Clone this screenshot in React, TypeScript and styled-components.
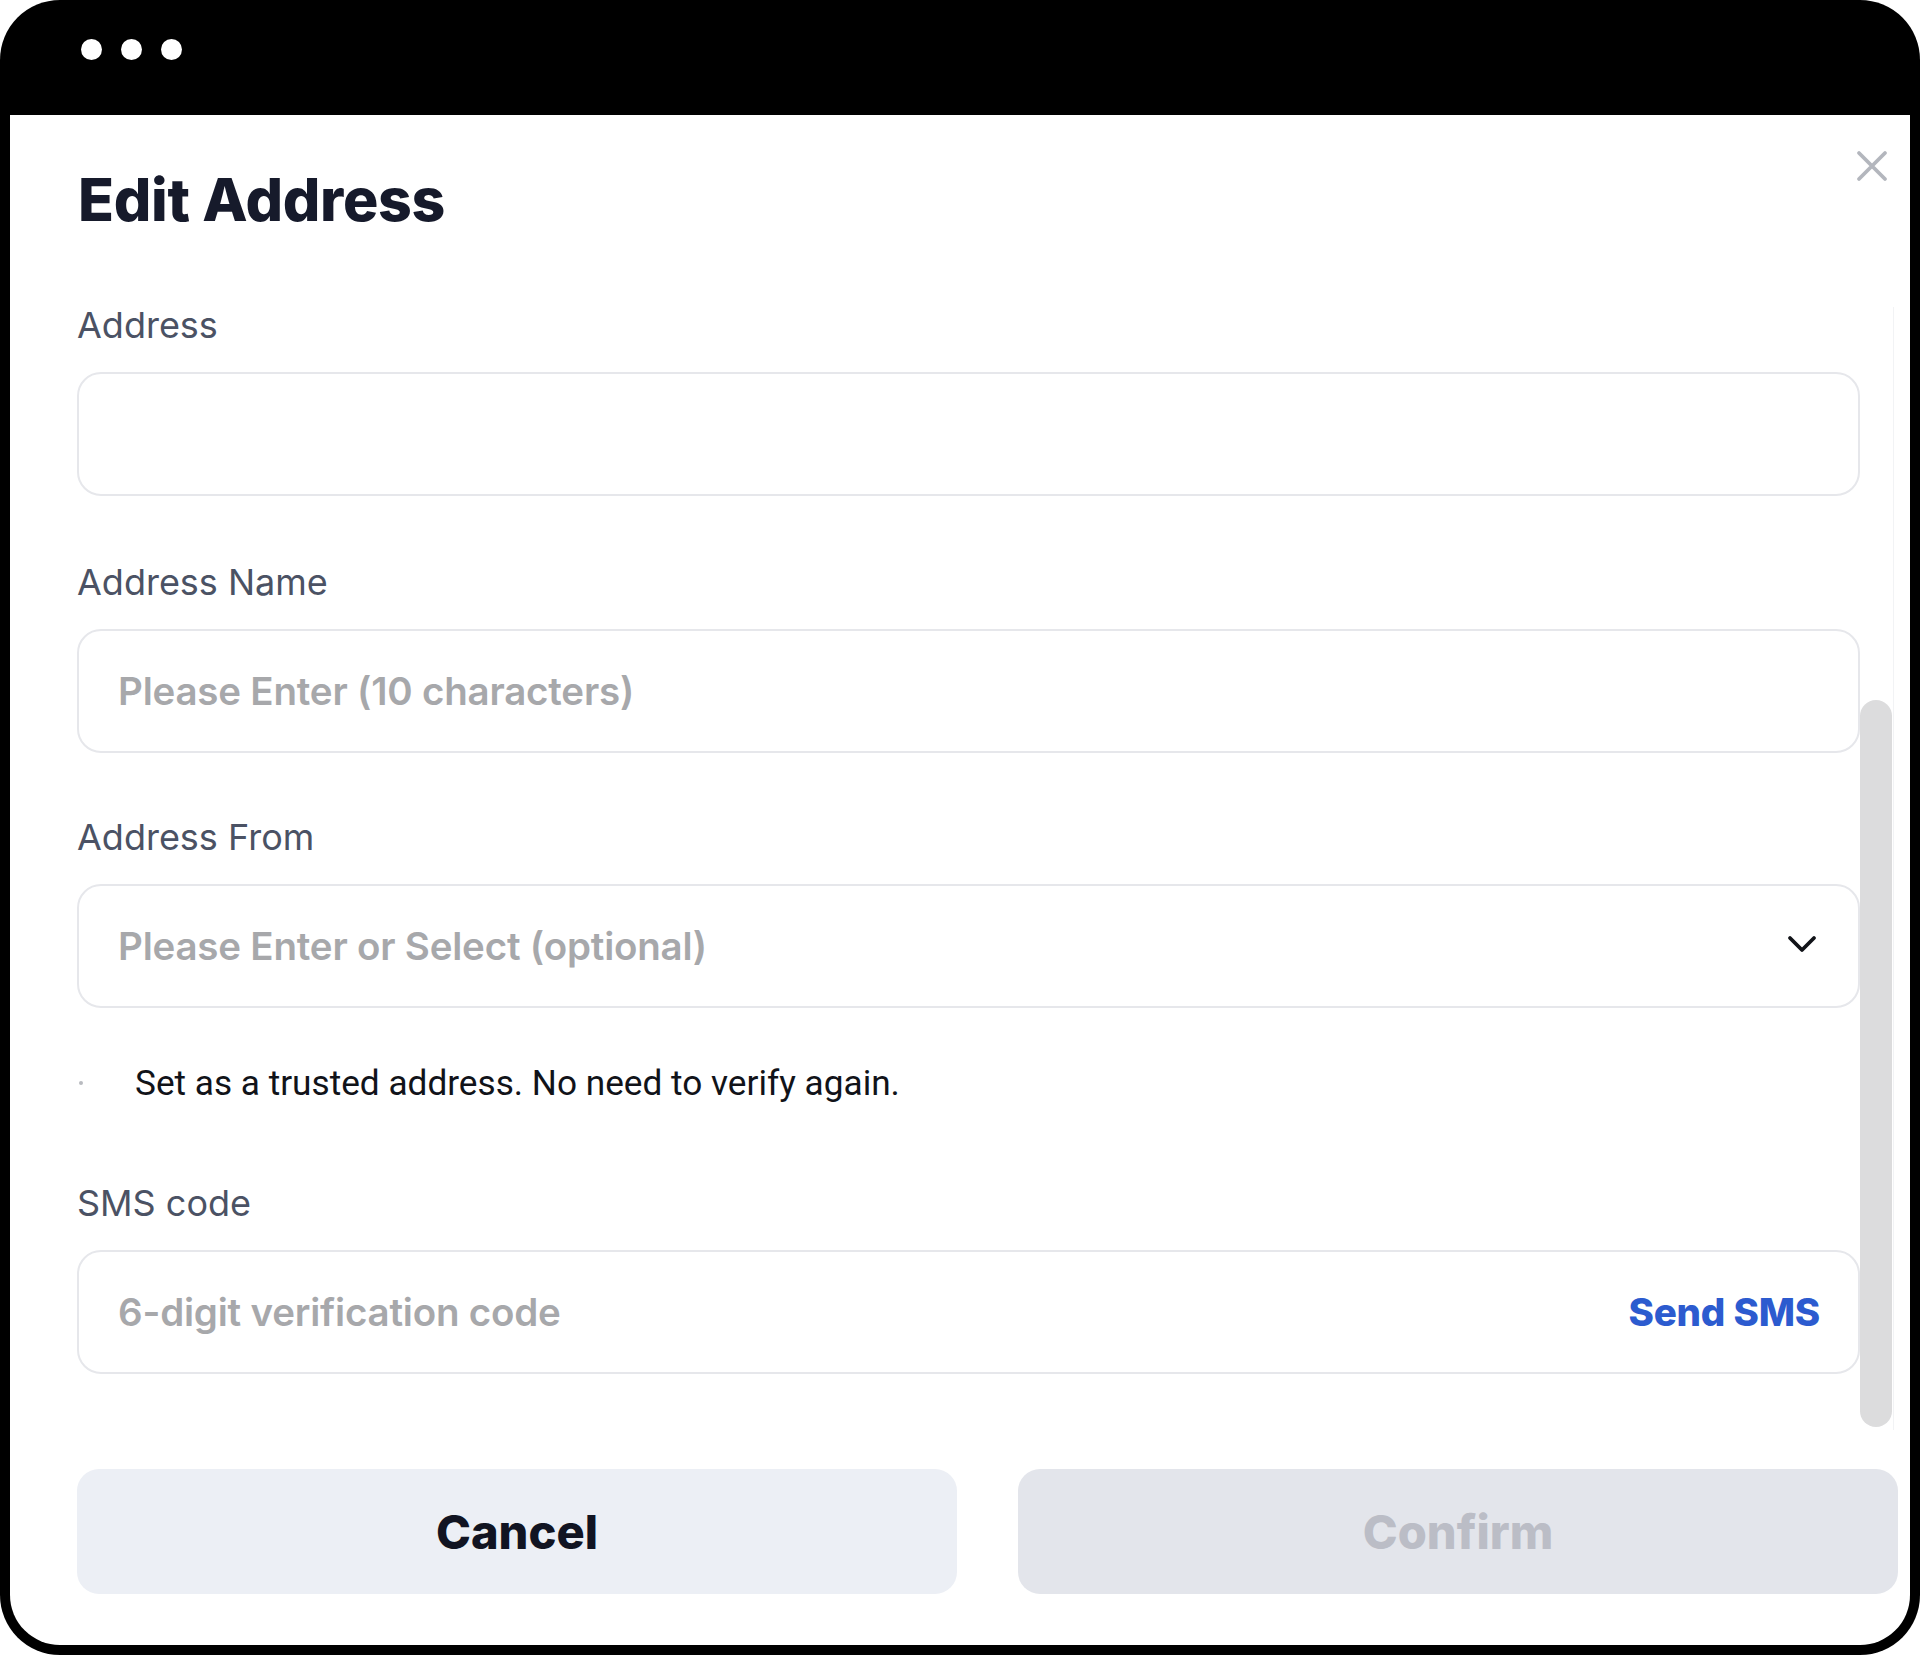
import React from "react";
import styled, { createGlobalStyle } from "styled-components";

const GlobalStyle = createGlobalStyle`
  html, body {
    margin: 0;
    padding: 0;
    background: #ffffff;
  }
  * { box-sizing: border-box; }
`;

const Frame = styled.div`
  width: 1920px;
  height: 1655px;
  background: #000000;
  border-radius: 60px;
  padding: 0 10px 10px;
  display: flex;
  flex-direction: column;
  font-family: Inter, "Noto Sans", sans-serif;
`;

const TitleBar = styled.div`
  height: 115px;
  flex-shrink: 0;
  display: flex;
  align-items: flex-start;
  gap: 19px;
  padding: 39px 0 0 71px;
`;

const Light = styled.span`
  width: 21px;
  height: 21px;
  border-radius: 50%;
  background: #ffffff;
`;

const Sheet = styled.div`
  flex: 1;
  background: #ffffff;
  border-radius: 0 0 50px 50px;
  display: flex;
  flex-direction: column;
`;

const Header = styled.div`
  display: flex;
  justify-content: space-between;
  align-items: flex-start;
  padding: 49px 20px 0 68px;
`;

const Title = styled.h1`
  margin: 0;
  font-size: 59px;
  line-height: 72px;
  font-weight: 800;
  color: #161a2b;
  letter-spacing: -0.3px;
`;

const CloseButton = styled.button`
  margin-top: -16px;
  width: 36px;
  height: 36px;
  padding: 0;
  border: none;
  background: transparent;
  display: flex;
  align-items: center;
  justify-content: center;
  cursor: pointer;
`;

const Body = styled.div`
  display: flex;
  margin-top: 64px;
  padding: 0 16px 0 67px;
`;

const Form = styled.div`
  flex: 1;
  display: flex;
  flex-direction: column;
  padding-bottom: 56px;
`;

const Field = styled.div<{ $gapTop?: number }>`
  display: flex;
  flex-direction: column;
  gap: 22px;
  margin-top: ${(p) => p.$gapTop ?? 0}px;
`;

const Label = styled.label`
  font-size: 36px;
  line-height: 50px;
  color: #4b5264;
  font-weight: 400;
`;

const InputBox = styled.div`
  height: 124px;
  border: 2px solid #e6e7eb;
  border-radius: 24px;
  display: flex;
  align-items: center;
  padding: 0 38px 0 39px;
  gap: 20px;
`;

const Placeholder = styled.span`
  flex: 1;
  font-size: 38.5px;
  font-weight: 600;
  color: #a7a8ab;
  letter-spacing: -0.2px;
`;

const SendLink = styled.span`
  font-size: 38.5px;
  font-weight: 800;
  color: #2c5bcf;
  letter-spacing: -0.2px;
`;

const ChevronSlot = styled.span`
  display: flex;
  margin: -4px 3px 0 0;
`;

const CheckRow = styled.div`
  display: flex;
  align-items: center;
  height: 50px;
  margin-top: 50px;
  gap: 52px;
`;

const CheckDot = styled.span`
  width: 4px;
  height: 4px;
  margin-left: 2px;
  border-radius: 50%;
  background: #b9bbc0;
`;

const CheckText = styled.span`
  font-family: Roboto, "Noto Sans", sans-serif;
  font-size: 35.2px;
  color: #111319;
`;

const ScrollTrack = styled.div`
  width: 34px;
  margin-top: 7px;
  border-right: 1px solid #f2f3f5;
  display: flex;
  flex-direction: column;
  justify-content: flex-end;
  align-items: flex-start;
  padding-bottom: 3px;
`;

const ScrollThumb = styled.div<{ $height: number }>`
  width: 32px;
  height: ${(p) => p.$height}px;
  border-radius: 16px;
  background: #dcdcdd;
`;

const Footer = styled.div`
  display: flex;
  gap: 61px;
  margin-top: 39px;
  padding: 0 12px 0 67px;
`;

const ActionButton = styled.button<{ $variant: "cancel" | "confirm" }>`
  flex: 1;
  height: 125px;
  border: none;
  border-radius: 22px;
  font-family: Inter, "Noto Sans", sans-serif;
  font-size: 47px;
  font-weight: 800;
  background: ${(p) => (p.$variant === "cancel" ? "#eceff5" : "#e3e5eb")};
  color: ${(p) => (p.$variant === "cancel" ? "#111422" : "#bbbdc6")};
  cursor: ${(p) => (p.$variant === "cancel" ? "pointer" : "default")};
`;

const CloseIcon = () => (
  <svg width="32" height="32" viewBox="0 0 32 32" fill="none">
    <path d="M3 3L29 29M29 3L3 29" stroke="#b3b6bd" strokeWidth="3.8" strokeLinecap="round" />
  </svg>
);

const Chevron = () => (
  <svg width="30" height="18" viewBox="0 0 30 18" fill="none">
    <path d="M3 3L15 15L27 3" stroke="#111318" strokeWidth="3.8" strokeLinecap="round" strokeLinejoin="round" />
  </svg>
);

export default function App() {
  return (
    <>
      <GlobalStyle />
      <Frame>
        <TitleBar>
          <Light />
          <Light />
          <Light />
        </TitleBar>
        <Sheet>
          <Header>
            <Title>Edit Address</Title>
            <CloseButton aria-label="Close">
              <CloseIcon />
            </CloseButton>
          </Header>
          <Body>
            <Form>
              <Field>
                <Label>Address</Label>
                <InputBox />
              </Field>
              <Field $gapTop={61}>
                <Label>Address Name</Label>
                <InputBox>
                  <Placeholder>Please Enter (10 characters)</Placeholder>
                </InputBox>
              </Field>
              <Field $gapTop={59}>
                <Label>Address From</Label>
                <InputBox>
                  <Placeholder>Please Enter or Select (optional)</Placeholder>
                  <ChevronSlot>
                    <Chevron />
                  </ChevronSlot>
                </InputBox>
              </Field>
              <CheckRow>
                <CheckDot />
                <CheckText>Set as a trusted address. No need to verify again.</CheckText>
              </CheckRow>
              <Field $gapTop={70}>
                <Label>SMS code</Label>
                <InputBox>
                  <Placeholder>6-digit verification code</Placeholder>
                  <SendLink>Send SMS</SendLink>
                </InputBox>
              </Field>
            </Form>
            <ScrollTrack>
              <ScrollThumb $height={727} />
            </ScrollTrack>
          </Body>
          <Footer>
            <ActionButton $variant="cancel">Cancel</ActionButton>
            <ActionButton $variant="confirm">Confirm</ActionButton>
          </Footer>
        </Sheet>
      </Frame>
    </>
  );
}
